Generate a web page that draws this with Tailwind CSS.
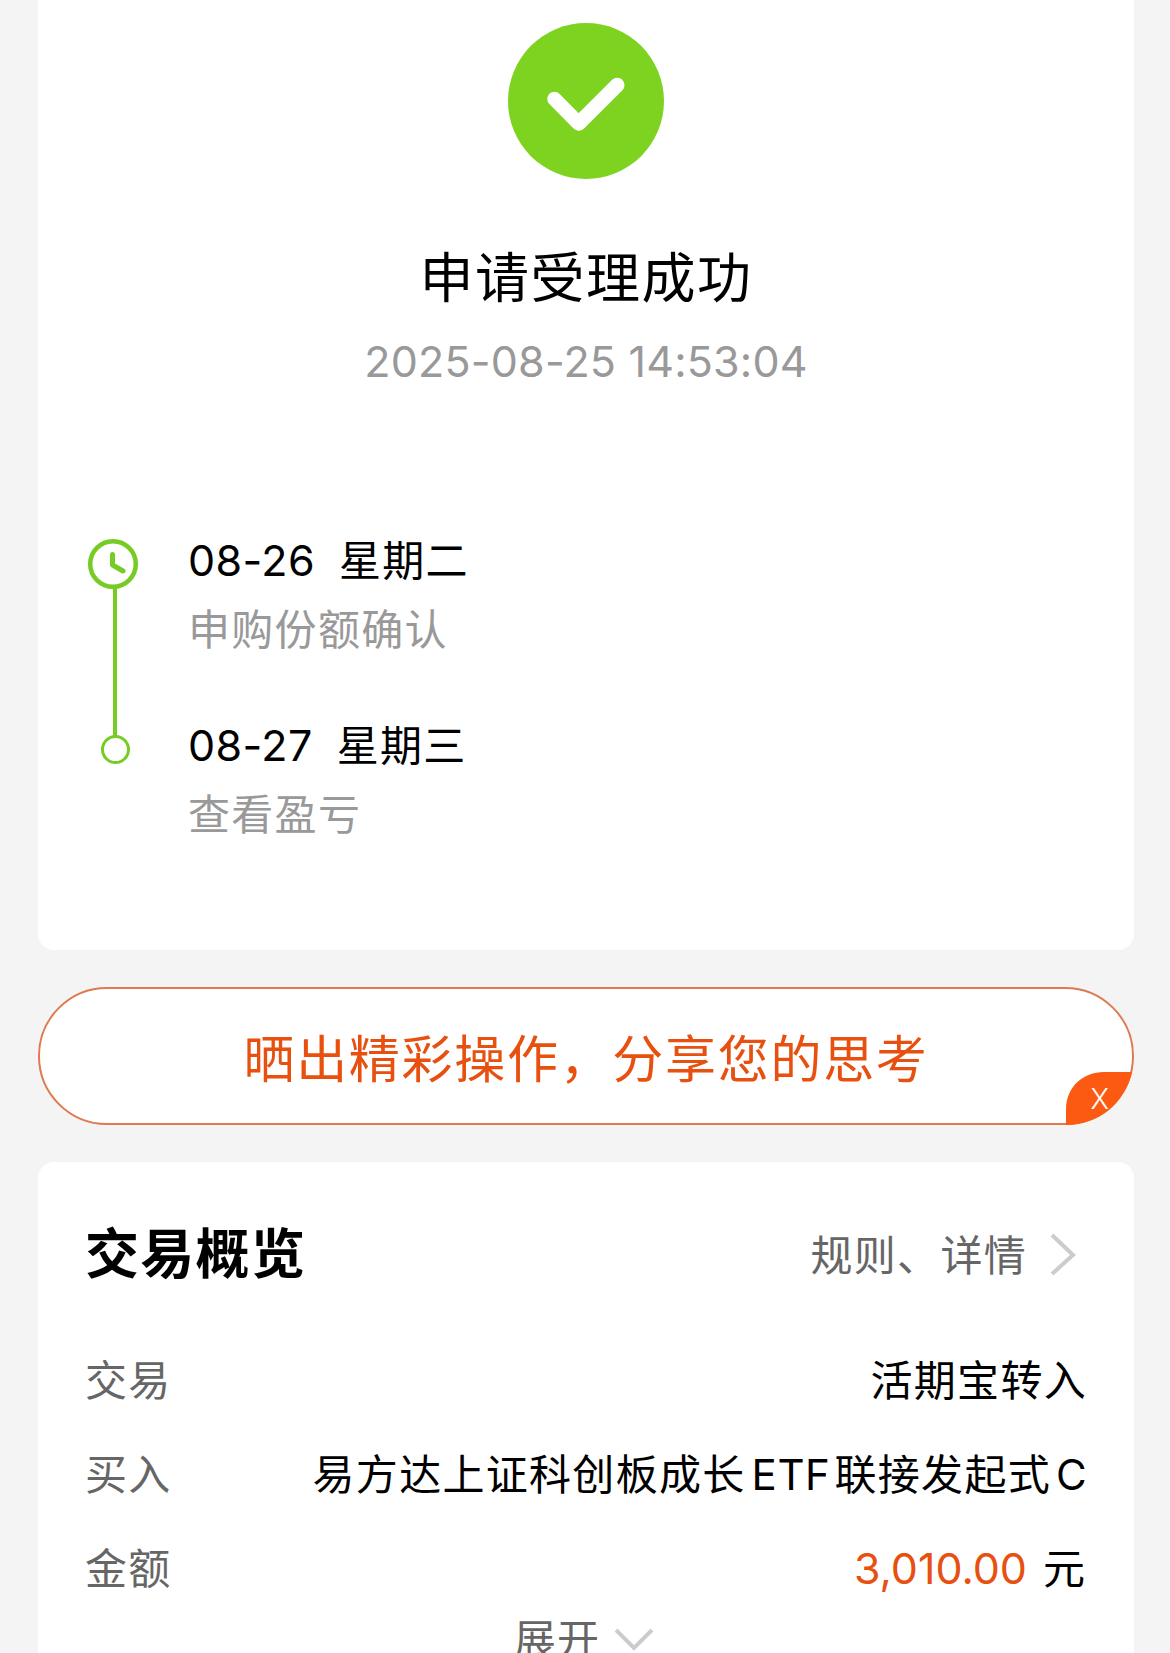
<!DOCTYPE html>
<html lang="zh-CN">
<head>
  <meta charset="UTF-8">
  <meta name="viewport" content="width=device-width, initial-scale=1.0">
  <title>申请受理成功</title>
  <script src="https://cdn.jsdelivr.net/npm/@tailwindcss/browser@4"></script>
</head>
<body class="bg-[#f4f4f4] font-['Inter','Noto_Sans_CJK_SC',sans-serif] text-black">
  <main class="w-[1170px] h-[1653px] pl-[38px] pr-[36px] overflow-hidden">

    <!-- result -->
    <section class="h-[950px] bg-white rounded-b-2xl">
      <div class="flex flex-col items-center pt-[23px]">
        <svg class="w-[156px] h-[156px]" viewBox="0 0 156 156" fill="none">
          <circle cx="78" cy="78" r="78" fill="#7ed321"/>
          <path d="M46.5 76L70.7 100.500L109.300 62" stroke="#fff" stroke-width="14.5" stroke-linecap="round" stroke-linejoin="round"/>
        </svg>
        <h1 class="mt-[60px] h-[80px] leading-[80px] text-[54px] tracking-[1.5px] whitespace-nowrap">申请受理成功</h1>
        <p class="mt-[12px] h-[60px] leading-[60px] text-[43px] tracking-[0.2px] text-[#999] whitespace-nowrap">2025-08-25 14:53:04</p>
      </div>

      <div class="mt-[139px] pl-[48px] flex">
        <svg class="w-[54px] h-[240px] mt-[8px]" viewBox="0 0 54 240" fill="none" stroke="#76cc22">
          <circle cx="27" cy="26" r="22.8" stroke-width="4.5"/>
          <path d="M26.500 16.500V27L37 33" stroke-width="5" stroke-linecap="round" stroke-linejoin="round"/>
          <path d="M29 50V198" stroke-width="4"/>
          <circle cx="29.500" cy="211.500" r="13" stroke-width="3"/>
        </svg>
        <ul class="ml-[48px]">
          <li class="h-[185px]">
            <p class="h-[60px] leading-[60px] text-[43px] whitespace-nowrap"><span class="tracking-[0.4px]">08-26</span><span class="ml-[24px] text-[42px] tracking-[1.3px]">星期二</span></p>
            <p class="mt-[10px] h-[60px] leading-[60px] text-[42px] tracking-[1.3px] text-[#999]">申购份额确认</p>
          </li>
          <li>
            <p class="h-[60px] leading-[60px] text-[43px] whitespace-nowrap"><span class="tracking-[0.4px]">08-27</span><span class="ml-[24px] text-[42px] tracking-[1.3px]">星期三</span></p>
            <p class="mt-[10px] h-[60px] leading-[60px] text-[42px] tracking-[1.3px] text-[#999]">查看盈亏</p>
          </li>
        </ul>
      </div>
    </section>

    <!-- share -->
    <section class="relative mt-[37px] h-[138px] rounded-full border-2 border-[#dd7a50] bg-white flex items-center justify-center">
      <span class="pt-[9px] text-[51px] tracking-[1.7px] text-[#e8500f] whitespace-nowrap">晒出精彩操作，分享您的思考</span>
      <svg class="absolute -right-[2px] -bottom-[2px] w-[68px] h-[53px]" viewBox="0 0 68 53">
        <path d="M0 53V37C0 15 17 0 38 0H66C59 31 33 53 0 53Z" fill="#fc5a13"/>
      </svg>
      <button class="absolute right-[23px] bottom-[8px] h-[32px] leading-[32px] text-[28px] font-light text-white">X</button>
    </section>

    <!-- overview -->
    <section class="mt-[37px] h-[520px] bg-white rounded-t-2xl pl-[47px] pr-[49px]">
      <div class="pt-[53px] flex items-center justify-between">
        <h2 class="h-[80px] leading-[80px] text-[54px] tracking-[1.3px] font-bold">交易概览</h2>
        <div class="flex items-center text-[42px] tracking-[1.3px] text-[#666]">
          <span>规则、详情</span>
          <svg class="ml-[22px] mr-[8px] w-[28px] h-[44px]" viewBox="0 0 28 44" fill="none" stroke="#ccc" stroke-width="4">
            <path d="M3 2L24 22L3 41"/>
          </svg>
        </div>
      </div>
      <dl class="mt-[38px] text-[42px]">
        <div class="flex items-center justify-between h-[94px]">
          <dt class="tracking-[1.3px] text-[#666]">交易</dt>
          <dd class="-mr-[2px] tracking-[1.3px]">活期宝转入</dd>
        </div>
        <div class="flex items-center justify-between h-[94px]">
          <dt class="tracking-[1.3px] text-[#666]">买入</dt>
          <dd class="-mr-[3px] tracking-[1.3px] whitespace-nowrap">易方达上证科创板成长<span class="ml-[6px] mr-[4px] tracking-[0.6px]">ETF</span>联接发起式<span class="ml-[5px]">C</span></dd>
        </div>
        <div class="flex items-center justify-between h-[94px]">
          <dt class="tracking-[1.3px] text-[#666]">金额</dt>
          <dd class="whitespace-nowrap"><span class="text-[43px] text-[#e8500f]">3,010.00</span><span class="ml-[16px]">元</span></dd>
        </div>
      </dl>
      <div class="-mt-[6px] flex items-center justify-center h-[60px] text-[42px] tracking-[1.3px] text-[#666]">
        <span>展开</span>
        <svg class="ml-[14px] w-[42px] h-[26px]" viewBox="0 0 42 26" fill="none" stroke="#ccc" stroke-width="4">
          <path d="M2 4L20 22L38 4"/>
        </svg>
      </div>
    </section>
  </main>
</body>
</html>
